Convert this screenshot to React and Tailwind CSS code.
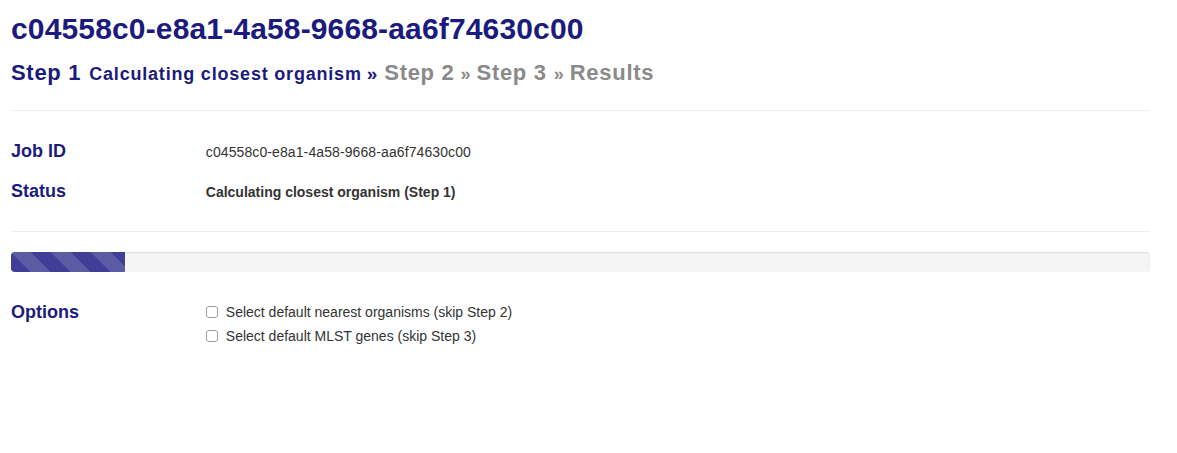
import React from "react";

const navy = "text-[#1b1b7d]";

function Checkbox({ label }) {
  return (
    <label className="flex items-center gap-[8px] h-[24px] leading-[24px] text-[14px] text-[#333]">
      <span className="inline-block w-[12px] h-[12px] border border-[#9a9a9a] rounded-[3px] bg-white" />
      <span>{label}</span>
    </label>
  );
}

export default function App() {
  return (
    <div className="bg-white min-h-[453px] w-[1177px]" style={{ fontFamily: '"Liberation Sans", Arial, sans-serif' }}>
      <div className="ml-[11px] w-[1139px] pt-[12px]">
        <h2 className={`${navy} text-[30px] leading-[33px] font-bold tracking-[0.15px]`}>c04558c0-e8a1-4a58-9668-aa6f74630c00</h2>
        <div className="mt-[16px] h-[24px] leading-[24px] font-bold whitespace-nowrap flex items-baseline">
          <span className={`${navy} text-[22px] tracking-[0.7px] mr-[8px]`}>Step 1</span>
          <span className={`${navy} text-[18px] tracking-[0.8px] mr-[5px]`}>Calculating closest organism</span>
          <span className={`${navy} text-[19px] mr-[7px]`}>»</span>
          <span className="text-[#8a8a8a] text-[22px] tracking-[0.7px] mr-[6px]">Step 2</span>
          <span className="text-[#8a8a8a] text-[18px] mr-[6px]">»</span>
          <span className="text-[#8a8a8a] text-[22px] tracking-[0.7px] mr-[7px]">Step 3</span>
          <span className="text-[#8a8a8a] text-[18px] mr-[6px]">»</span>
          <span className="text-[#8a8a8a] text-[22px] tracking-[0.7px]">Results</span>
        </div>
        <div className="mt-[25px] h-px bg-[#eeeeee]" />
        <div className="mt-[20px] flex items-baseline h-[40px] leading-[40px]">
          <div className={`w-[194.8px] shrink-0 ${navy} text-[18px] font-bold`}>Job ID</div>
          <div className="text-[14px] text-[#333] tracking-[0.1px]">c04558c0-e8a1-4a58-9668-aa6f74630c00</div>
        </div>
        <div className="flex items-baseline h-[40px] leading-[40px]">
          <div className={`w-[194.8px] shrink-0 ${navy} text-[18px] font-bold`}>Status</div>
          <div className="text-[14px] text-[#333] font-bold">Calculating closest organism (Step 1)</div>
        </div>
        <div className="mt-[20px] h-px bg-[#eeeeee]" />
        <div className="mt-[20px] h-[20px] rounded-[4px] bg-[#f5f5f5] shadow-[inset_0_1px_2px_rgba(0,0,0,0.1)] overflow-hidden">
          <div className="h-full w-[10%] bg-[#3f3f97] bg-[linear-gradient(45deg,rgba(255,255,255,.15)_25%,transparent_25%,transparent_50%,rgba(255,255,255,.15)_50%,rgba(255,255,255,.15)_75%,transparent_75%,transparent)] bg-[length:40px_40px]" />
        </div>
        <div className="mt-[28px] flex items-baseline">
          <div className={`w-[194.8px] shrink-0 ${navy} text-[18px] font-bold leading-[24px]`}>Options</div>
          <div className="flex flex-col">
            <Checkbox label="Select default nearest organisms (skip Step 2)" />
            <Checkbox label="Select default MLST genes (skip Step 3)" />
          </div>
        </div>
      </div>
    </div>
  );
}
